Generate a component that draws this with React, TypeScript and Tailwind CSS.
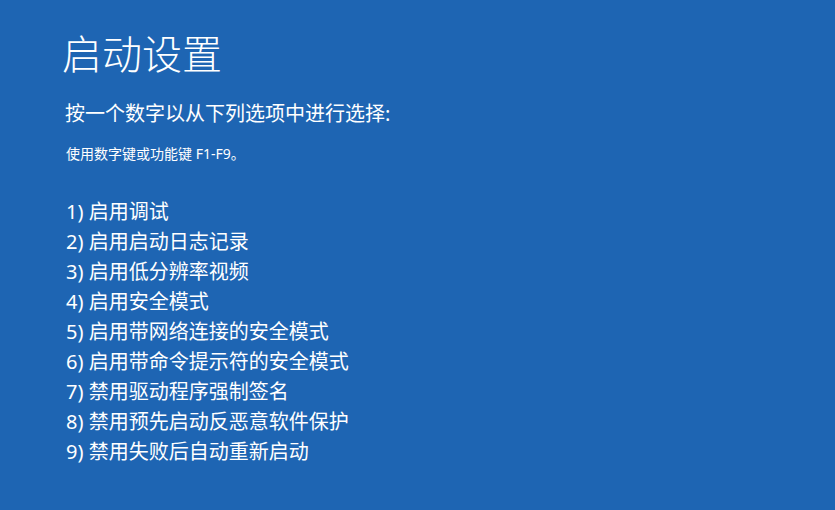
export default function App() {
  const items = [
    "1) 启用调试",
    "2) 启用启动日志记录",
    "3) 启用低分辨率视频",
    "4) 启用安全模式",
    "5) 启用带网络连接的安全模式",
    "6) 启用带命令提示符的安全模式",
    "7) 禁用驱动程序强制签名",
    "8) 禁用预先启动反恶意软件保护",
    "9) 禁用失败后自动重新启动",
  ];

  return (
    <div
      className="w-[835px] h-[510px] bg-[#1e65b3] text-white overflow-hidden pl-[62px] pt-[30px]"
      style={{ fontFamily: '"Segoe UI", "Noto Sans", "Noto Sans CJK SC", sans-serif' }}
    >
      <h1 className="text-[40px] leading-[48px] font-light">启动设置</h1>
      <p className="mt-[22px] pl-[3px] text-[20px] leading-[28px]">按一个数字以从下列选项中进行选择:</p>
      <p className="mt-[16px] pl-[4px] text-[14px] leading-[20px]">使用数字键或功能键 F1-F9。</p>
      <ul className="mt-[33px] pl-[4px] flex flex-col">
        {items.map((t) => (
          <li key={t} className="text-[20px] leading-[30px]">
            {t}
          </li>
        ))}
      </ul>
    </div>
  );
}
